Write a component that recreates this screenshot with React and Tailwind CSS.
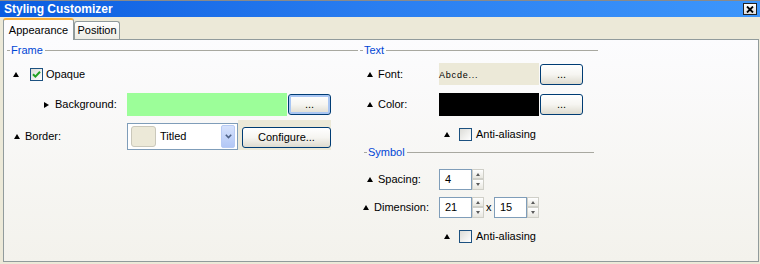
import React from "react";

function Tri() {
  return <span className="inline-block w-0 h-0 shrink-0 border-x-[3px] border-x-transparent border-b-[5px] border-b-black" />;
}

function RightTri() {
  return <span className="inline-block w-0 h-0 shrink-0 border-y-[3px] border-y-transparent border-l-[5px] border-l-black" />;
}

function Check({ checked }) {
  return (
    <span className="w-[13px] h-[13px] shrink-0 border border-[#1c5180] bg-linear-to-br from-[#dcdcd7] to-white flex items-center justify-center">
      {checked && (
        <svg width="9" height="9" viewBox="0 0 9 9">
          <path d="M1 4.2 L3.4 6.6 L8 1.8" stroke="#21a121" strokeWidth="2" fill="none" />
        </svg>
      )}
    </span>
  );
}

function Btn({ className, children }) {
  return (
    <div
      className={
        "h-[21px] shrink-0 rounded-[3px] border border-[#003c74] bg-linear-to-b from-white via-[#f6f5f1] to-[#dedbcf] flex items-center justify-center text-[11px] leading-none " +
        className
      }
    >
      {children}
    </div>
  );
}

function SpinArrow({ up }) {
  return up ? (
    <span className="inline-block w-0 h-0 border-x-[2px] border-x-transparent border-b-[3px] border-b-[#5a5a5a]" />
  ) : (
    <span className="inline-block w-0 h-0 border-x-[2px] border-x-transparent border-t-[3px] border-t-[#5a5a5a]" />
  );
}

function SpinField({ value }) {
  return (
    <div className="flex h-[21px] shrink-0">
      <div className="w-[33px] h-[21px] border border-[#7f9db9] bg-white pl-[5px] flex items-center text-[11px]">{value}</div>
      <div className="w-[12px] h-[21px] flex flex-col">
        <div className="h-[10px] border border-[#cfcfc8] bg-linear-to-b from-white to-[#e8e7e0] flex items-center justify-center">
          <SpinArrow up />
        </div>
        <div className="h-[11px] border border-[#cfcfc8] bg-linear-to-b from-white to-[#e8e7e0] flex items-center justify-center">
          <SpinArrow />
        </div>
      </div>
    </div>
  );
}

function Header({ label, pad, lineClass }) {
  return (
    <div className={"h-[14px] flex items-center " + pad}>
      <span className="w-[3px] h-px bg-[#a8a8a0] shrink-0" />
      <span className="ml-px text-[11px] leading-none text-[#0046d5]">{label}</span>
      <span className={"ml-[2px] h-px flex-1 bg-[#a8a8a0] " + lineClass} />
    </div>
  );
}

export default function App() {
  return (
    <div className="w-[760px] h-[264px] overflow-hidden bg-[#ece9d8] font-['Liberation_Sans',Arial,sans-serif] text-black text-[11px]">
      {/* Title bar */}
      <div className="h-[17px] border-t border-t-[#8a8a8a] bg-linear-to-r from-[#0a5ce0] via-[#2a7ef0] to-[#3d96fb] flex items-center justify-between pl-[4px] pr-[3px]">
        <span className="text-white font-bold text-[12px] leading-none">Styling Customizer</span>
        <div className="w-[14px] h-[12px] border border-[#222] bg-linear-to-b from-white to-[#dcdcdc] flex items-center justify-center">
          <svg width="8" height="7" viewBox="0 0 8 7">
            <path d="M1 0.5 L7 6.5 M7 0.5 L1 6.5" stroke="#000" strokeWidth="1.8" />
          </svg>
        </div>
      </div>

      {/* Tabs */}
      <div className="h-[22px] flex items-end pl-[3px]">
        <div className="relative z-10 -mb-px w-[71px] h-[22px] rounded-t-[3px] border-x border-x-[#919b9c] border-t-2 border-t-[#f7b03b] bg-[#fcfcfe] flex items-center justify-center">
          Appearance
        </div>
        <div className="w-[46px] h-[18px] rounded-t-[3px] border-x border-t border-[#919b9c] bg-linear-to-b from-white to-[#ecebe3] flex items-center justify-center">
          Position
        </div>
      </div>

      {/* Panel */}
      <div className="ml-[3px] w-[756px] h-[223px] border border-[#919b9c] bg-linear-to-b from-[#fcfcfe] to-[#f3f2ec] flex">
        {/* Left column: Frame */}
        <div className="w-[355px] flex flex-col pt-[3px]">
          <Header label="Frame" pad="pl-[3px]" lineClass="mr-[1px]" />
          <div className="h-[34px] flex items-center pl-[9px]">
            <Tri />
            <span className="ml-[11px]"><Check checked /></span>
            <span className="ml-[3px]">Opaque</span>
          </div>
          <div className="mt-[2px] h-[23px] flex items-center">
            <div className="w-[123px] flex items-center pl-[40px]">
              <RightTri />
              <span className="ml-[6px]">Background:</span>
            </div>
            <div className="w-[160px] h-[23px] bg-[#9cfe99]" />
            <Btn className="ml-px w-[43px] shadow-[inset_0_0_0_2px_#a9c6f3]">...</Btn>
          </div>
          <div className="mt-[7px] h-[27px] flex items-center">
            <div className="w-[123px] flex items-center pl-[10px]">
              <Tri />
              <span className="ml-[5px]">Border:</span>
            </div>
            <div className="w-[111px] h-[27px] border border-[#7f9db9] bg-white flex items-center pl-[3px] pr-[2px]">
              <div className="w-[25px] h-[21px] rounded-[3px] border border-[#cac8bb] bg-[#ece9d8]" />
              <span className="ml-[4px] flex-1">Titled</span>
              <div className="w-[14px] h-[23px] rounded-[2px] border border-[#b8cbf4] bg-linear-to-b from-[#d6e2fc] to-[#b2c7f6] flex items-center justify-center">
                <svg width="7" height="5" viewBox="0 0 7 5">
                  <path d="M0.8 0.8 L3.5 3.6 L6.2 0.8" stroke="#4d6185" strokeWidth="1.6" fill="none" />
                </svg>
              </div>
            </div>
            <div className="self-end w-[93px] h-[30px] bg-[#ece9d8] pt-[7px] pl-[4px]">
              <Btn className="w-[89px]">Configure...</Btn>
            </div>
          </div>
        </div>

        {/* Right column: Text / Symbol */}
        <div className="w-[239px] flex flex-col pt-[3px]">
          <Header label="Text" pad="pl-[1px]" lineClass="" />
          <div className="mt-[6px] h-[22px] flex items-center">
            <div className="w-[80px] flex items-center pl-[8px]">
              <Tri />
              <span className="ml-[5px]">Font:</span>
            </div>
            <div className="w-[100px] h-[22px] bg-[#ece9d8] flex items-center pt-[4px] text-[9px] tracking-[0.8px]">
              Abcde...
            </div>
            <Btn className="self-end ml-px w-[43px]">...</Btn>
          </div>
          <div className="mt-[8px] h-[23px] flex items-center">
            <div className="w-[80px] flex items-center pl-[8px]">
              <Tri />
              <span className="ml-[5px]">Color:</span>
            </div>
            <div className="w-[100px] h-[23px] bg-black" />
            <Btn className="ml-px w-[43px]">...</Btn>
          </div>
          <div className="mt-[12px] h-[13px] flex items-center pl-[85px]">
            <Tri />
            <span className="ml-[9px]"><Check /></span>
            <span className="ml-[4px]">Anti-aliasing</span>
          </div>
          <div className="mt-[4px]">
            <Header label="Symbol" pad="pl-[5px] pr-[4px]" lineClass="" />
          </div>
          <div className="mt-[10px] h-[21px] flex items-center">
            <div className="w-[80px] flex items-center pl-[8px]">
              <Tri />
              <span className="ml-[5px]">Spacing:</span>
            </div>
            <SpinField value="4" />
          </div>
          <div className="mt-[7px] h-[21px] flex items-center">
            <div className="w-[80px] flex items-center pl-[4px]">
              <Tri />
              <span className="ml-[5px]">Dimension:</span>
            </div>
            <SpinField value="21" />
            <span className="ml-[2px] w-[8px]">x</span>
            <SpinField value="15" />
          </div>
          <div className="mt-[12px] h-[13px] flex items-center pl-[85px]">
            <Tri />
            <span className="ml-[9px]"><Check /></span>
            <span className="ml-[4px]">Anti-aliasing</span>
          </div>
        </div>
      </div>
    </div>
  );
}
